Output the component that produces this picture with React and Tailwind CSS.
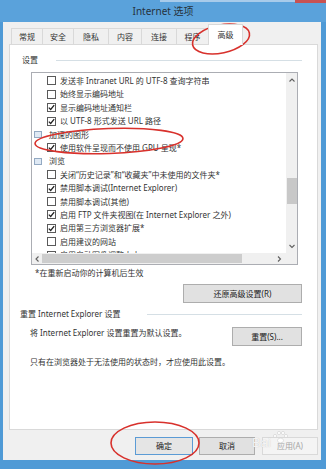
import React from 'react';

const rows = [
  { t: 'c', c: false, s: '发送非 Intranet URL 的 UTF-8 查询字符串' },
  { t: 'c', c: false, s: '始终显示编码地址' },
  { t: 'c', c: true, s: '显示编码地址通知栏' },
  { t: 'c', c: true, s: '以 UTF-8 形式发送 URL 路径' },
  { t: 'g', s: '加速的图形' },
  { t: 'c', c: true, s: '使用软件呈现而不使用 GPU 呈现*' },
  { t: 'g', s: '浏览' },
  { t: 'c', c: false, s: '关闭“历史记录”和“收藏夹”中未使用的文件夹*' },
  { t: 'c', c: true, s: '禁用脚本调试(Internet Explorer)' },
  { t: 'c', c: false, s: '禁用脚本调试(其他)' },
  { t: 'c', c: true, s: '启用 FTP 文件夹视图(在 Internet Explorer 之外)' },
  { t: 'c', c: true, s: '启用第三方浏览器扩展*' },
  { t: 'c', c: false, s: '启用建议的网站' },
  { t: 'c', c: false, s: '启用自动图像调整大小' },
];

const tabs = [
  { s: '常规', w: 'w-[31px]' },
  { s: '安全', w: 'w-[31px]' },
  { s: '隐私', w: 'w-[35px]' },
  { s: '内容', w: 'w-[33px]' },
  { s: '连接', w: 'w-[35px]' },
  { s: '程序', w: 'w-[32px]' },
];

function Check({ checked }) {
  return (
    <span className="w-[9px] h-[9px] border border-[#5a5a5a] bg-white flex items-center justify-center shrink-0">
      {checked && (
        <svg width="7" height="7" viewBox="0 0 7 7">
          <path d="M0.8 3.6 L2.7 5.5 L6.2 1.2" fill="none" stroke="#1e1e1e" strokeWidth="1.3" />
        </svg>
      )}
    </span>
  );
}

function Chevron({ dir }) {
  const d = {
    up: 'M0.5 3.5 L3 1 L5.5 3.5',
    down: 'M0.5 1 L3 3.5 L5.5 1',
    left: 'M3.5 0.5 L1 3 L3.5 5.5',
    right: 'M1 0.5 L3.5 3 L1 5.5',
  }[dir];
  const vertical = dir === 'up' || dir === 'down';
  return (
    <svg width={vertical ? 6 : 5} height={vertical ? 5 : 6} viewBox={vertical ? '0 0 6 5' : '0 0 5 6'}>
      <path d={d} fill="none" stroke="#606060" strokeWidth="1.1" />
    </svg>
  );
}

export default function App() {
  return (
    <div className="relative w-[326px] h-[469px] overflow-hidden bg-[#4f9ad6] font-['Noto_Sans','Noto_Sans_CJK_SC',sans-serif] text-[#2b2b2b]">
      {/* top edge details */}
      <div className="absolute left-[160px] top-0 w-[135px] h-[2px] bg-[#a8cbea]" />
      <div className="absolute right-0 top-0 w-[31px] h-[3px] bg-[#c85252]" />

      {/* title bar */}
      <div className="h-[22px] flex items-center justify-center text-[10px] text-[#26323d] bg-[#5aa2db]">
        Internet 选项
      </div>

      {/* client area */}
      <div className="ml-[3px] w-[318px] h-[438px] bg-[#f0f0f0] flex flex-col text-[8px] leading-[10px]">
        {/* tabs */}
        <div className="h-[22px] flex items-end pl-[8px]">
          {tabs.map((t, i) => (
            <div
              key={t.s}
              className={`${t.w} h-[16px] border-t border-l border-[#d9d9d9] bg-[#f0f0f0] flex items-center justify-center text-[#333] ${i === 0 ? '' : ''}`}
            >
              {t.s}
            </div>
          ))}
          <div className="relative z-10 w-[35px] h-[21px] -mb-px border-t border-x border-[#d9d9d9] bg-white flex items-center justify-center text-[#333]">
            高级
          </div>
        </div>

        {/* panel */}
        <div className="ml-[6px] w-[309px] h-[386px] bg-white border border-[#d9d9d9] flex flex-col">
          {/* group header 设置 */}
          <div className="mt-[9px] h-[12px] flex items-center pl-[12px] pr-[15px]">
            <span className="w-[34px] text-[#333]">设置</span>
            <div className="flex-1 h-px bg-[#d5dfe5]" />
          </div>

          {/* listbox */}
          <div className="mt-[6px] ml-[21px] w-[267px] h-[193px] border border-[#abadb3] flex flex-col">
            <div className="h-[180px] flex">
              <div className="flex-1 overflow-hidden pt-[1.3px]">
                {rows.map((r, i) =>
                  r.t === 'g' ? (
                    <div key={i} className="h-[13.4px] flex items-center pl-[2px] whitespace-nowrap">
                      <span className="w-[8px] h-[7px] border border-[#93a9c2] bg-[#dfe9f4] shrink-0" />
                      <span className="ml-[7px] text-[#333]">{r.s}</span>
                    </div>
                  ) : (
                    <div key={i} className="h-[13.4px] flex items-center pl-[15px] whitespace-nowrap">
                      <Check checked={r.c} />
                      <span className="ml-[4px] text-[#333]">{r.s}</span>
                    </div>
                  )
                )}
              </div>
              {/* vertical scrollbar */}
              <div className="w-[11px] bg-[#f0f0f0] flex flex-col items-center">
                <div className="h-[14px] flex items-center justify-center">
                  <Chevron dir="up" />
                </div>
                <div className="h-[91px]" />
                <div className="w-[10px] h-[26px] bg-[#c8c8c8]" />
                <div className="flex-1" />
                <div className="h-[14px] flex items-center justify-center">
                  <Chevron dir="down" />
                </div>
              </div>
            </div>
            {/* horizontal scrollbar */}
            <div className="h-[11px] flex">
              <div className="flex-1 bg-[#f0f0f0] flex items-center">
                <div className="w-[10px] flex items-center justify-center">
                  <Chevron dir="left" />
                </div>
                <div className="w-[200px] h-[9px] bg-[#cdcdcd]" />
                <div className="flex-1" />
                <div className="w-[14px] flex items-center justify-center">
                  <Chevron dir="right" />
                </div>
              </div>
              <div className="w-[11px] bg-[#f0f0f0]" />
            </div>
          </div>

          <div className="mt-[3px] ml-[25px] text-[#333]">*在重新启动你的计算机后生效</div>

          <div className="mt-[6px] self-end mr-[15px] w-[119px] h-[19px] bg-[#e1e1e1] border border-[#adadad] flex items-center justify-center text-[#222]">
            还原高级设置(R)
          </div>

          {/* group header 重置 */}
          <div className="mt-[5px] h-[12px] flex items-center pl-[10px] pr-[15px]">
            <span className="w-[127px] whitespace-nowrap text-[#333]">重置 Internet Explorer 设置</span>
            <div className="flex-1 h-px bg-[#d5dfe5]" />
          </div>

          <div className="mt-[7px] flex items-start pl-[20px] pr-[15px]">
            <span className="mt-[1px] text-[#333] whitespace-nowrap">将 Internet Explorer 设置重置为默认设置。</span>
            <div className="ml-auto w-[70px] h-[19px] bg-[#e1e1e1] border border-[#adadad] flex items-center justify-center text-[#222]">
              重置(S)...
            </div>
          </div>

          <div className="mt-[11px] pl-[20px] text-[#333] whitespace-nowrap">
            只有在浏览器处于无法使用的状态时，才应使用此设置。
          </div>
        </div>

        {/* dialog buttons */}
        <div className="mt-[7px] flex justify-end pr-[3px]">
          <div className="w-[58px] h-[18px] bg-[#e5e5e5] border border-[#5b9bd5] flex items-center justify-center text-[#222]">
            确定
          </div>
          <div className="ml-[6px] w-[56px] h-[18px] bg-[#e1e1e1] border border-[#adadad] flex items-center justify-center text-[#222]">
            取消
          </div>
          <div className="ml-[7px] w-[56px] h-[18px] bg-[#f4f4f4] border border-[#d9d9d9] flex items-center justify-center text-[#a6a6a6]">
            应用(A)
          </div>
        </div>
      </div>

      {/* watermark */}
      <div className="absolute left-[252px] top-[436px] text-[13px] leading-[14px] text-white/80 font-['Liberation_Sans',sans-serif] [text-shadow:0_0_1px_#bbb]">
        Bai
      </div>

      {/* red annotation ellipses */}
      <svg className="absolute left-0 top-0 pointer-events-none" width="326" height="469" viewBox="0 0 326 469">
        <ellipse cx="221" cy="39" rx="29" ry="14" transform="rotate(-12 221 39)" fill="none" stroke="#d8312c" strokeWidth="1.6" />
        <ellipse cx="109" cy="141" rx="74" ry="12.5" transform="rotate(-2 109 141)" fill="none" stroke="#d8312c" strokeWidth="1.6" />
        <ellipse cx="155" cy="443" rx="44" ry="21" fill="none" stroke="#d8312c" strokeWidth="1.6" />
        <g fill="white" fillOpacity="0.85" stroke="#c8c8c8" strokeWidth="0.5">
          <circle cx="275" cy="436" r="1.6" />
          <circle cx="279" cy="433" r="1.6" />
          <circle cx="283" cy="433" r="1.6" />
          <circle cx="286" cy="436" r="1.6" />
          <ellipse cx="280.5" cy="440.5" rx="3" ry="2.4" />
        </g>
      </svg>
    </div>
  );
}
